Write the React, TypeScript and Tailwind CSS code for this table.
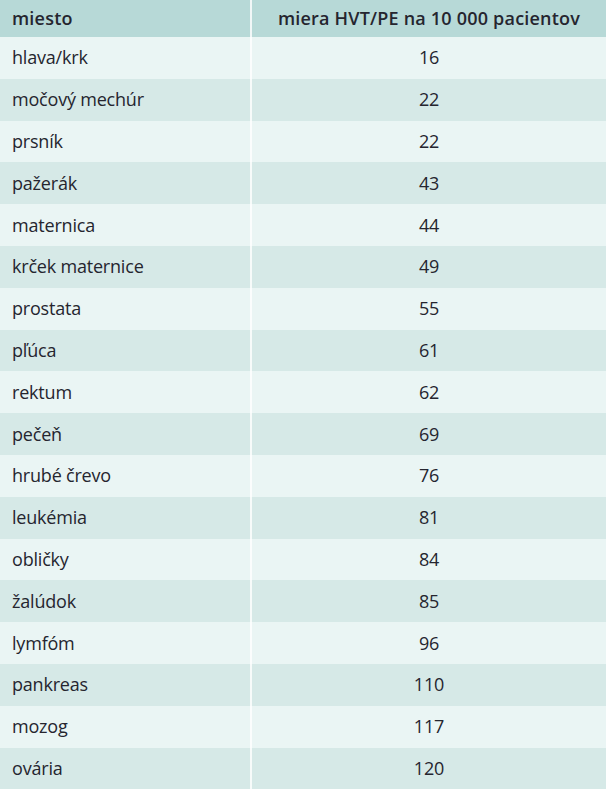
const rows: [string, string][] = [
  ["hlava/krk", "16"],
  ["močový mechúr", "22"],
  ["prsník", "22"],
  ["pažerák", "43"],
  ["maternica", "44"],
  ["krček maternice", "49"],
  ["prostata", "55"],
  ["pľúca", "61"],
  ["rektum", "62"],
  ["pečeň", "69"],
  ["hrubé črevo", "76"],
  ["leukémia", "81"],
  ["obličky", "84"],
  ["žalúdok", "85"],
  ["lymfóm", "96"],
  ["pankreas", "110"],
  ["mozog", "117"],
  ["ovária", "120"],
];

export default function App() {
  return (
    <div className="w-[611px] h-[800px] bg-white font-['Open_Sans',sans-serif] text-[#25252f]">
      <div className="w-[606px]">
        <div className="flex h-[37px] bg-[#b7d9d7] font-semibold text-[18px] tracking-[0.2px]">
          <div className="w-[250px] flex items-center pl-3">miesto</div>
          <div className="w-[2px] bg-white/80" />
          <div className="flex-1 flex items-center justify-center">
            miera HVT/PE na 10 000 pacientov
          </div>
        </div>
        {rows.map(([place, rate], i) => (
          <div
            key={place}
            className={`flex h-[41.8px] text-[18px] font-medium tracking-[-0.2px] ${
              i % 2 === 0 ? "bg-[#eaf5f4]" : "bg-[#d6e9e7]"
            }`}
          >
            <div className="w-[250px] flex items-center pl-3">{place}</div>
            <div className="w-[2px] bg-white/80" />
            <div className="flex-1 flex items-center justify-center">{rate}</div>
          </div>
        ))}
      </div>
    </div>
  );
}
